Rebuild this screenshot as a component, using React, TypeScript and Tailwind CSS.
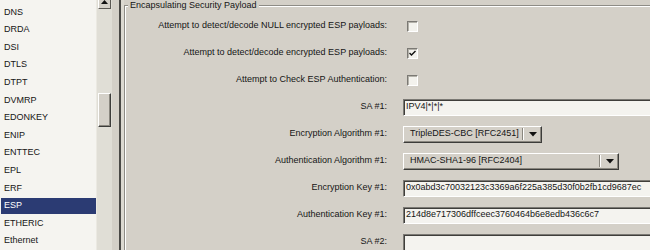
import React from 'react';

const protocols = ['DNS', 'DRDA', 'DSI', 'DTLS', 'DTPT', 'DVMRP', 'EDONKEY', 'ENIP', 'ENTTEC', 'EPL', 'ERF', 'ESP', 'ETHERIC', 'Ethernet'];

function CheckBox({ checked }: { checked?: boolean }) {
  return (
    <div className="ml-1 flex h-[11px] w-[11px] items-center justify-center border border-t-[#7b7974] border-l-[#7b7974] border-b-white border-r-white bg-[#f3f2ed] shadow-[inset_1px_1px_0_#b4b2aa]">
      {checked && (
        <svg width="7" height="7" viewBox="0 0 7 7">
          <path d="M0.5 3 L2.5 5 L6.5 1" stroke="#111" strokeWidth="1.4" fill="none" />
        </svg>
      )}
    </div>
  );
}

function TextBox({ value }: { value: string }) {
  return (
    <div className="flex h-[17px] w-[270px] items-center overflow-hidden whitespace-nowrap border border-t-[#7b7974] border-l-[#7b7974] border-b-white border-r-white bg-[#f4f3ef] pl-[2px] shadow-[inset_1px_1px_0_#3f3e3b]">
      {value}
    </div>
  );
}

function Combo({ value, width }: { value: string; width: string }) {
  return (
    <div className={`flex h-[17px] ${width} items-center border border-t-white border-l-white border-b-[#3c3c3a] border-r-[#3c3c3a] bg-[#d4d0c8] shadow-[inset_-1px_-1px_0_#8a877f]`}>
      <span className="flex-1 pl-[6px] whitespace-nowrap">{value}</span>
      <div className="h-[12px] w-[2px] border-l border-l-[#8a877f] border-r border-r-white" />
      <div className="flex w-[17px] justify-center">
        <svg width="8" height="5" viewBox="0 0 8 5">
          <path d="M0 0 H8 L4 4.5 Z" fill="#111" />
        </svg>
      </div>
    </div>
  );
}

export default function App() {
  return (
    <div className="flex h-[250px] w-[650px] overflow-hidden bg-[#d4d0c8] font-['Liberation_Sans',Arial,sans-serif] text-[9px] text-[#151515]">
      {/* protocol list */}
      <div className="flex w-[96px] shrink-0 flex-col bg-[#f5f4f0] pl-px pt-[3.5px]">
        {protocols.map((p) => (
          <div key={p} className="flex h-[17.7px] items-center">
            <div
              className={`flex h-[16px] w-full items-center pl-[3px] ${
                p === 'ESP' ? 'bg-[#2b3b73] text-white' : ''
              }`}
            >
              {p}
            </div>
          </div>
        ))}
      </div>

      {/* scrollbar */}
      <div className="flex w-[16px] shrink-0 flex-col border-l border-l-[#ebe9e2] bg-[#e0ded6] px-px">
        <div className="-mt-[7px] flex h-[16px] items-end justify-center border border-t-white border-l-white border-b-[#5a5853] border-r-[#5a5853] bg-[#d4d0c8] pb-[4px]">
          <svg width="7" height="4" viewBox="0 0 7 4">
            <path d="M0 4 H7 L3.5 0 Z" fill="#111" />
          </svg>
        </div>
        <div className="mt-[84px] h-[34px] border border-t-white border-l-white border-b-[#3c3c3a] border-r-[#3c3c3a] bg-[#d4d0c8] shadow-[inset_-1px_-1px_0_#8a877f]" />
      </div>

      {/* splitter */}
      <div className="flex w-[12px] shrink-0">
        <div className="flex-1" />
        <div className="w-[2px] bg-[#4a4946]" />
        <div className="w-[3px] bg-[#dcd9d1]" />
      </div>

      {/* options panel */}
      <div className="flex-1 overflow-hidden">
        <fieldset className="w-[560px] border border-[#8e8c86] shadow-[inset_1px_1px_0_#fff] h-[300px]">
          <legend className="ml-[3px] bg-[#d4d0c8] px-[2px] leading-[11px]">Encapsulating Security Payload</legend>
          <div className="grid grid-cols-[262px_1fr] auto-rows-[27px] items-center gap-x-4 pt-[1.5px]">
            <span className="text-right">Attempt to detect/decode NULL encrypted ESP payloads:</span>
            <CheckBox />
            <span className="text-right">Attempt to detect/decode encrypted ESP payloads:</span>
            <CheckBox checked />
            <span className="text-right">Attempt to Check ESP Authentication:</span>
            <CheckBox />
            <span className="text-right">SA #1:</span>
            <TextBox value="IPV4|*|*|*" />
            <span className="text-right">Encryption Algorithm #1:</span>
            <Combo value="TripleDES-CBC [RFC2451]" width="w-[139px]" />
            <span className="text-right">Authentication Algorithm #1:</span>
            <Combo value="HMAC-SHA1-96 [RFC2404]" width="w-[216px]" />
            <span className="text-right">Encryption Key #1:</span>
            <TextBox value="0x0abd3c70032123c3369a6f225a385d30f0b2fb1cd9687ec" />
            <span className="text-right">Authentication Key #1:</span>
            <TextBox value="214d8e717306dffceec3760464b6e8edb436c6c7" />
            <span className="text-right">SA #2:</span>
            <TextBox value="" />
          </div>
        </fieldset>
      </div>
    </div>
  );
}
